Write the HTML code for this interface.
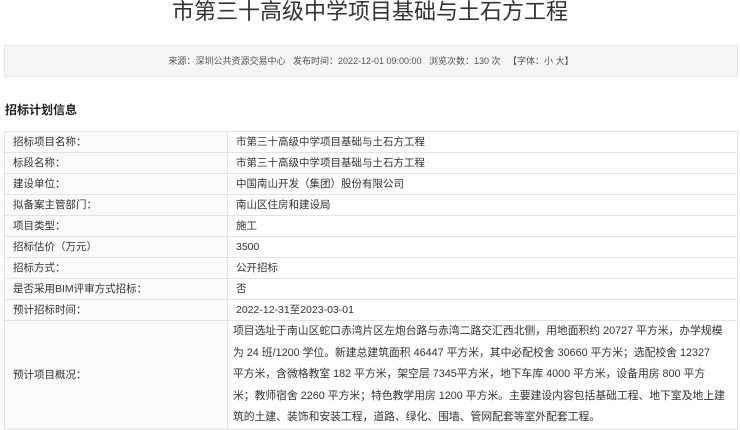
<!DOCTYPE html>
<html><head><meta charset="utf-8"><style>
body{margin:0;width:740px;height:418px;overflow:hidden;background:#fff;font-family:"Liberation Sans","Noto Sans CJK SC",sans-serif;color:#333}
.t{position:absolute;top:-1px;left:0;width:740px;text-align:center;font-size:22px;line-height:26px;color:#333}
.info{position:absolute;left:4px;top:45px;width:732px;height:30px;background:#f5f5f5;border:1px solid #e6e6e6;text-align:center;font-size:9px;line-height:30px;color:#555}
.h{position:absolute;left:5px;top:101px;font-size:12px;font-weight:bold;color:#222}
table{position:absolute;left:4px;top:131px;width:734px;border-collapse:collapse;font-size:10.5px;color:#333}
td{border:1px solid #e3e3e3;height:20px;padding:0 0 0 8px;line-height:20px;white-space:nowrap}
td.l{width:214px;background:#fbfbfb}
td.v{padding-left:5px;line-height:21.5px;font-size:10.8px}
</style></head><body>
<div class="t">市第三十高级中学项目基础与土石方工程</div>
<div class="info">来源：深圳公共资源交易中心&nbsp;&nbsp; 发布时间：2022-12-01 09:00:00&nbsp;&nbsp; 浏览次数：130 次&nbsp;&nbsp; 【字体：小 大】</div>
<div class="h">招标计划信息</div>
<table>
<tr><td class="l">招标项目名称：</td><td>市第三十高级中学项目基础与土石方工程</td></tr>
<tr><td class="l">标段名称：</td><td>市第三十高级中学项目基础与土石方工程</td></tr>
<tr><td class="l">建设单位：</td><td>中国南山开发（集团）股份有限公司</td></tr>
<tr><td class="l">拟备案主管部门：</td><td>南山区住房和建设局</td></tr>
<tr><td class="l">项目类型：</td><td>施工</td></tr>
<tr><td class="l">招标估价（万元）</td><td>3500</td></tr>
<tr><td class="l">招标方式：</td><td>公开招标</td></tr>
<tr><td class="l">是否采用BIM评审方式招标：</td><td>否</td></tr>
<tr><td class="l">预计招标时间：</td><td>2022-12-31至2023-03-01</td></tr>
<tr><td class="l">预计项目概况：</td><td class="v">项目选址于南山区蛇口赤湾片区左炮台路与赤湾二路交汇西北侧，用地面积约 20727 平方米，办学规模<br>为 24 班/1200 学位。新建总建筑面积 46447 平方米，其中必配校舍 30660 平方米；选配校舍 12327<br>平方米，含微格教室 182 平方米，架空层 7345平方米，地下车库 4000 平方米，设备用房 800 平方<br>米；教师宿舍 2260 平方米；特色教学用房 1200 平方米。主要建设内容包括基础工程、地下室及地上建<br>筑的土建、装饰和安装工程，道路、绿化、围墙、管网配套等室外配套工程。</td></tr>
</table>
</body></html>
